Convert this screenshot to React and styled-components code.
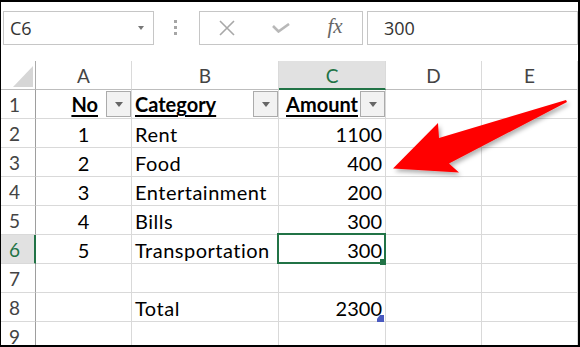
import styled, { createGlobalStyle } from "styled-components";

const GREEN = "#217346";
const GRID = "#d9d9d9";
const CELL_FONT = `Lato, "Noto Sans", sans-serif`;
const UI_FONT = `"Open Sans", "Noto Sans", sans-serif`;

const GlobalStyle = createGlobalStyle`
  html, body { margin: 0; padding: 0; background: #fff; }
  * { box-sizing: border-box; }
`;

const Frame = styled.div`
  position: relative;
  width: 580px;
  height: 347px;
  border-style: solid;
  border-color: #000;
  border-width: 2px 2px 2px 1px;
  overflow: hidden;
  background: #fff;
`;

const FormulaBar = styled.div`
  display: flex;
  align-items: flex-start;
  height: 59px;
  padding: 9px 0 0 2px;
  font-family: ${UI_FONT};
  font-size: 18px;
  color: #333;
`;

const NameBox = styled.div`
  width: 151px;
  height: 34px;
  border: 1px solid #c6c6c6;
  display: flex;
  align-items: center;
  justify-content: space-between;
  padding: 0 9px 0 6px;

  &::after {
    content: "";
    border-left: 3.5px solid transparent;
    border-right: 3.5px solid transparent;
    border-top: 4px solid #777;
  }
`;

const Dots = styled.div`
  display: flex;
  flex-direction: column;
  gap: 3px;
  margin: 9px 22px 0 20px;

  span {
    width: 3px;
    height: 3px;
    background: #a6a6a6;
  }
`;

const ButtonsBox = styled.div`
  display: flex;
  height: 34px;
  border: 1px solid #c6c6c6;
`;

const IconSlot = styled.div`
  width: 54px;
  display: flex;
  align-items: center;
  justify-content: center;
`;

const Fx = styled.span`
  font-family: "Liberation Serif", serif;
  font-style: italic;
  font-size: 21px;
  color: #666;
  margin-top: -3px;
`;

const FormulaInput = styled.div`
  flex: 1;
  height: 34px;
  margin-left: 4px;
  border: 1px solid #c6c6c6;
  display: flex;
  align-items: center;
  padding-left: 16px;
`;

const Sheet = styled.div`
  display: grid;
  grid-template-columns: 35px 96px 147px 107px 96px 96px;
  grid-auto-rows: 29px;
  height: 284px;
  overflow: hidden;
  font-family: ${CELL_FONT};
`;

const Corner = styled.div`
  display: flex;
  align-items: flex-end;
  justify-content: flex-end;
  padding: 0 2px 2px 0;
  border-right: 1px solid #ababab;
  border-bottom: 1px solid #bdbdbd;

  &::after {
    content: "";
    width: 20px;
    height: 21px;
    background: #d6d6d6;
    clip-path: polygon(100% 0, 100% 100%, 0 100%);
  }
`;

const ColHead = styled.div`
  display: flex;
  align-items: center;
  justify-content: center;
  padding-top: 1px;
  font-size: 19px;
  border-right: 1px solid #dadada;
  border-bottom: ${(p) => (p.$selected ? `2px solid ${GREEN}` : "1px solid #bdbdbd")};
  background: ${(p) => (p.$selected ? "#e1e1e1" : "#fff")};
  color: ${(p) => (p.$selected ? GREEN : "#444")};
`;

const RowHead = styled.div`
  display: flex;
  align-items: center;
  padding-left: 8px;
  font-size: 19px;
  border-bottom: 1px solid ${GRID};
  border-right: ${(p) => (p.$selected ? `2px solid ${GREEN}` : "1px solid #9e9e9e")};
  background: ${(p) => (p.$selected ? "#e1e1e1" : "#fff")};
  color: ${(p) => (p.$selected ? GREEN : "#444")};
`;

const justify = { left: "flex-start", center: "center", right: "flex-end" };

const Cell = styled.div`
  position: relative;
  display: flex;
  align-items: center;
  justify-content: ${(p) => justify[p.$align || "left"]};
  padding: 1px 3px 0 3px;
  font-size: 20px;
  letter-spacing: ${(p) => (p.$text ? "0.5px" : "0")};
  color: #000;
  white-space: nowrap;
  border-right: 1px solid ${GRID};
  border-bottom: 1px solid ${GRID};
`;

const HeaderCell = styled(Cell)`
  padding: 0;
`;

const HeaderLabel = styled.span`
  flex: 1;
  text-align: ${(p) => p.$align};
  padding: ${(p) => p.$pad};
  font-weight: 700;
  text-decoration: underline;
  text-decoration-thickness: 2px;
  text-underline-offset: 3px;
`;

const FilterButton = styled.span`
  flex: none;
  width: 25px;
  height: 26px;
  border: 1px solid #ababab;
  background: #f2f2f2;
  display: flex;
  align-items: center;
  justify-content: center;

  &::after {
    content: "";
    border-left: 4px solid transparent;
    border-right: 4px solid transparent;
    border-top: 5px solid #666;
  }
`;

const Selection = styled.div`
  position: absolute;
  top: -2px;
  left: -2px;
  right: -1px;
  bottom: -1px;
  border: 2px solid ${GREEN};
  z-index: 1;
  pointer-events: none;
`;

const FillHandle = styled.div`
  position: absolute;
  right: -2px;
  bottom: -3px;
  width: 6px;
  height: 6px;
  background: ${GREEN};
`;

const TableMark = styled.div`
  position: absolute;
  right: 1px;
  bottom: -1px;
  width: 7px;
  height: 7px;
  background: #4a5ac0;
  clip-path: polygon(45% 0, 100% 0, 100% 100%, 0 100%, 0 55%);
  z-index: 1;
`;

const Overlay = styled.svg`
  position: absolute;
  top: -2px;
  left: -1px;
  width: 580px;
  height: 347px;
  pointer-events: none;
  z-index: 2;
`;

const columns = ["A", "B", "C", "D", "E"];

const rows = [
  [1, "Rent", 1100],
  [2, "Food", 400],
  [3, "Entertainment", 200],
  [4, "Bills", 300],
  [5, "Transportation", 300],
  [null, null, null],
  [null, "Total", 2300],
  [null, null, null],
];

export default function App() {
  return (
    <>
      <GlobalStyle />
      <Frame>
        <FormulaBar>
          <NameBox>C6</NameBox>
          <Dots>
            <span />
            <span />
            <span />
          </Dots>
          <ButtonsBox>
            <IconSlot>
              <svg width="16" height="16" viewBox="0 0 16 16">
                <path d="M1 1 L15 15 M15 1 L1 15" stroke="#a8a8a8" strokeWidth="1.6" fill="none" />
              </svg>
            </IconSlot>
            <IconSlot>
              <svg width="18" height="10" viewBox="0 0 18 10">
                <path d="M1 3 L6.5 8.5 L17 1" stroke="#b8b8b8" strokeWidth="2.6" fill="none" />
              </svg>
            </IconSlot>
            <IconSlot>
              <Fx>fx</Fx>
            </IconSlot>
          </ButtonsBox>
          <FormulaInput>300</FormulaInput>
        </FormulaBar>

        <Sheet>
          <Corner />
          {columns.map((c) => (
            <ColHead key={c} $selected={c === "C"}>
              {c}
            </ColHead>
          ))}

          <RowHead>1</RowHead>
          <HeaderCell>
            <HeaderLabel $align="right" $pad="0 8px 0 0">No</HeaderLabel>
            <FilterButton />
          </HeaderCell>
          <HeaderCell>
            <HeaderLabel $align="left" $pad="0 0 0 3px">Category</HeaderLabel>
            <FilterButton />
          </HeaderCell>
          <HeaderCell>
            <HeaderLabel $align="right" $pad="0 2px 0 0">Amount</HeaderLabel>
            <FilterButton />
          </HeaderCell>
          <Cell />
          <Cell />

          {rows.map(([no, cat, amt], i) => {
            const rowNum = i + 2;
            return [
              <RowHead key={`h${rowNum}`} $selected={rowNum === 6}>
                {rowNum}
              </RowHead>,
              <Cell key={`a${rowNum}`} $align="center">{no}</Cell>,
              <Cell key={`b${rowNum}`} $text>{cat}</Cell>,
              <Cell key={`c${rowNum}`} $align="right">
                {amt}
                {rowNum === 6 && (
                  <Selection>
                    <FillHandle />
                  </Selection>
                )}
                {rowNum === 8 && <TableMark />}
              </Cell>,
              <Cell key={`d${rowNum}`} />,
              <Cell key={`e${rowNum}`} />,
            ];
          })}
        </Sheet>

        <Overlay viewBox="0 0 580 347">
          <defs>
            <filter id="shadow" x="-10%" y="-20%" width="130%" height="160%">
              <feDropShadow dx="2" dy="3" stdDeviation="2" floodColor="#000" floodOpacity="0.3" />
            </filter>
          </defs>
          <polygon
            points="566,100 439,138 438,123 393,168.5 459,172.5 449,163.5 567,102"
            fill="#ff0000"
            filter="url(#shadow)"
          />
        </Overlay>
      </Frame>
    </>
  );
}
